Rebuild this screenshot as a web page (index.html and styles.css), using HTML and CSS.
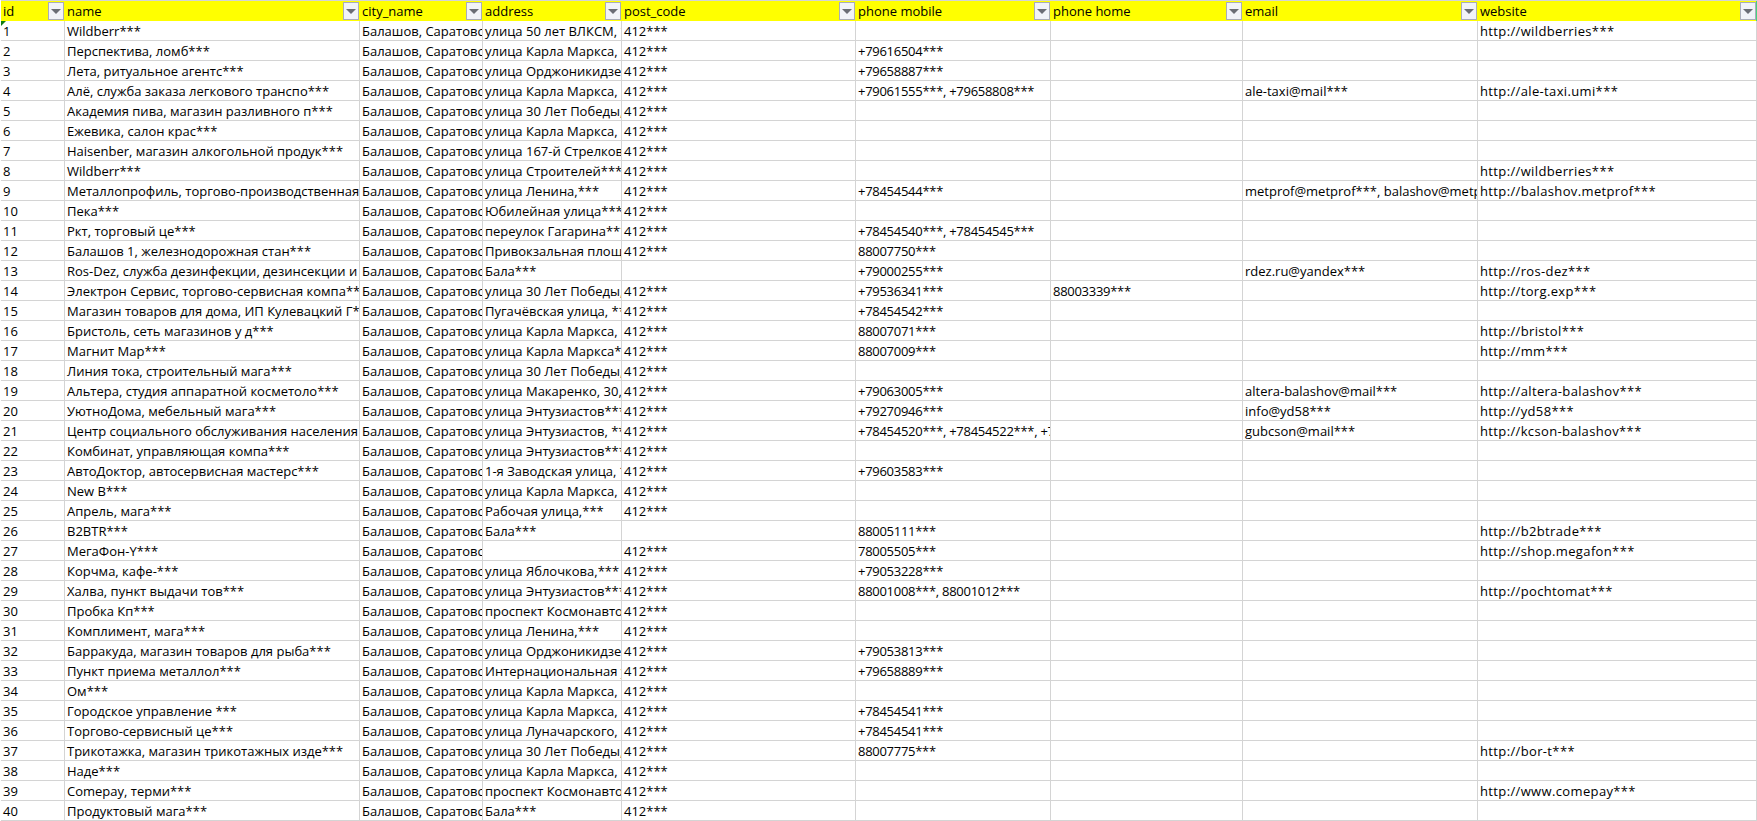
FILE: index.html
```html
<!DOCTYPE html>
<html lang="ru">
<head>
<meta charset="utf-8">
<title>Sheet</title>
<link rel="stylesheet" href="styles.css">
</head>
<body>
<table class="sheet">
<colgroup><col class="c-id"><col class="c-name"><col class="c-city"><col class="c-addr"><col class="c-post"><col class="c-mob"><col class="c-home"><col class="c-email"><col class="c-web"></colgroup>
<thead><tr>
<th><div class="head"><span class="label">id</span><span class="filter"><i class="arrow"></i></span></div></th>
<th><div class="head"><span class="label">name</span><span class="filter"><i class="arrow"></i></span></div></th>
<th><div class="head"><span class="label">city_name</span><span class="filter"><i class="arrow"></i></span></div></th>
<th><div class="head"><span class="label">address</span><span class="filter"><i class="arrow"></i></span></div></th>
<th><div class="head"><span class="label">post_code</span><span class="filter"><i class="arrow"></i></span></div></th>
<th><div class="head"><span class="label">phone mobile</span><span class="filter"><i class="arrow"></i></span></div></th>
<th><div class="head"><span class="label">phone home</span><span class="filter"><i class="arrow"></i></span></div></th>
<th><div class="head"><span class="label">email</span><span class="filter"><i class="arrow"></i></span></div></th>
<th class="last"><div class="head"><span class="label">website</span><span class="filter"><i class="arrow"></i></span></div></th>
</tr></thead>
<tbody>
<tr><td class="flagged">1<i class="flag"></i></td><td>Wildberr***</td><td>Балашов, Саратовская обл***</td><td>улица 50 лет ВЛКСМ, ***</td><td>412***</td><td></td><td></td><td></td><td>http://wildberries***</td></tr>
<tr><td>2</td><td>Перспектива, ломб***</td><td>Балашов, Саратовская обл***</td><td>улица Карла Маркса, ***</td><td>412***</td><td>+79616504***</td><td></td><td></td><td></td></tr>
<tr><td>3</td><td>Лета, ритуальное агентс***</td><td>Балашов, Саратовская обл***</td><td>улица Орджоникидзе, ***</td><td>412***</td><td>+79658887***</td><td></td><td></td><td></td></tr>
<tr><td>4</td><td>Алё, служба заказа легкового транспо***</td><td>Балашов, Саратовская обл***</td><td>улица Карла Маркса, ***</td><td>412***</td><td>+79061555***, +79658808***</td><td></td><td>ale-taxi@mail***</td><td>http://ale-taxi.umi***</td></tr>
<tr><td>5</td><td>Академия пива, магазин разливного п***</td><td>Балашов, Саратовская обл***</td><td>улица 30 Лет Победы, ***</td><td>412***</td><td></td><td></td><td></td><td></td></tr>
<tr><td>6</td><td>Ежевика, салон крас***</td><td>Балашов, Саратовская обл***</td><td>улица Карла Маркса, ***</td><td>412***</td><td></td><td></td><td></td><td></td></tr>
<tr><td>7</td><td>Haisenber, магазин алкогольной продук***</td><td>Балашов, Саратовская обл***</td><td>улица 167-й Стрелковой***</td><td>412***</td><td></td><td></td><td></td><td></td></tr>
<tr><td>8</td><td>Wildberr***</td><td>Балашов, Саратовская обл***</td><td>улица Строителей***</td><td>412***</td><td></td><td></td><td></td><td>http://wildberries***</td></tr>
<tr><td>9</td><td>Металлопрофиль, торгово-производственная компания***</td><td>Балашов, Саратовская обл***</td><td>улица Ленина,***</td><td>412***</td><td>+78454544***</td><td></td><td>metprof@metprof***, balashov@metprof***</td><td>http://balashov.metprof***</td></tr>
<tr><td>10</td><td>Пека***</td><td>Балашов, Саратовская обл***</td><td>Юбилейная улица***</td><td>412***</td><td></td><td></td><td></td><td></td></tr>
<tr><td>11</td><td>Ркт, торговый це***</td><td>Балашов, Саратовская обл***</td><td>переулок Гагарина***</td><td>412***</td><td>+78454540***, +78454545***</td><td></td><td></td><td></td></tr>
<tr><td>12</td><td>Балашов 1, железнодорожная стан***</td><td>Балашов, Саратовская обл***</td><td>Привокзальная площадь***</td><td>412***</td><td>88007750***</td><td></td><td></td><td></td></tr>
<tr><td>13</td><td>Ros-Dez, служба дезинфекции, дезинсекции и дератизации***</td><td>Балашов, Саратовская обл***</td><td>Бала***</td><td></td><td>+79000255***</td><td></td><td>rdez.ru@yandex***</td><td>http://ros-dez***</td></tr>
<tr><td>14</td><td>Электрон Сервис, торгово-сервисная компа***</td><td>Балашов, Саратовская обл***</td><td>улица 30 Лет Победы, ***</td><td>412***</td><td>+79536341***</td><td>88003339***</td><td></td><td>http://torg.exp***</td></tr>
<tr><td>15</td><td>Магазин товаров для дома, ИП Кулевацкий Г***</td><td>Балашов, Саратовская обл***</td><td>Пугачёвская улица, ***</td><td>412***</td><td>+78454542***</td><td></td><td></td><td></td></tr>
<tr><td>16</td><td>Бристоль, сеть магазинов у д***</td><td>Балашов, Саратовская обл***</td><td>улица Карла Маркса, ***</td><td>412***</td><td>88007071***</td><td></td><td></td><td>http://bristol***</td></tr>
<tr><td>17</td><td>Магнит Мар***</td><td>Балашов, Саратовская обл***</td><td>улица Карла Маркса***</td><td>412***</td><td>88007009***</td><td></td><td></td><td>http://mm***</td></tr>
<tr><td>18</td><td>Линия тока, строительный мага***</td><td>Балашов, Саратовская обл***</td><td>улица 30 Лет Победы, ***</td><td>412***</td><td></td><td></td><td></td><td></td></tr>
<tr><td>19</td><td>Альтера, студия аппаратной косметоло***</td><td>Балашов, Саратовская обл***</td><td>улица Макаренко, 30,***</td><td>412***</td><td>+79063005***</td><td></td><td>altera-balashov@mail***</td><td>http://altera-balashov***</td></tr>
<tr><td>20</td><td>УютноДома, мебельный мага***</td><td>Балашов, Саратовская обл***</td><td>улица Энтузиастов***</td><td>412***</td><td>+79270946***</td><td></td><td>info@yd58***</td><td>http://yd58***</td></tr>
<tr><td>21</td><td>Центр социального обслуживания населения Балашовского***</td><td>Балашов, Саратовская обл***</td><td>улица Энтузиастов, ***</td><td>412***</td><td>+78454520***, +78454522***, +78454***</td><td></td><td>gubcson@mail***</td><td>http://kcson-balashov***</td></tr>
<tr><td>22</td><td>Комбинат, управляющая компа***</td><td>Балашов, Саратовская обл***</td><td>улица Энтузиастов***</td><td>412***</td><td></td><td></td><td></td><td></td></tr>
<tr><td>23</td><td>АвтоДоктор, автосервисная мастерс***</td><td>Балашов, Саратовская обл***</td><td>1-я Заводская улица, ***</td><td>412***</td><td>+79603583***</td><td></td><td></td><td></td></tr>
<tr><td>24</td><td>New B***</td><td>Балашов, Саратовская обл***</td><td>улица Карла Маркса, ***</td><td>412***</td><td></td><td></td><td></td><td></td></tr>
<tr><td>25</td><td>Апрель, мага***</td><td>Балашов, Саратовская обл***</td><td>Рабочая улица,***</td><td>412***</td><td></td><td></td><td></td><td></td></tr>
<tr><td>26</td><td>B2BTR***</td><td>Балашов, Саратовская обл***</td><td>Бала***</td><td></td><td>88005111***</td><td></td><td></td><td>http://b2btrade***</td></tr>
<tr><td>27</td><td>МегаФон-Y***</td><td>Балашов, Саратовская обл***</td><td></td><td>412***</td><td>78005505***</td><td></td><td></td><td>http://shop.megafon***</td></tr>
<tr><td>28</td><td>Корчма, кафе-***</td><td>Балашов, Саратовская обл***</td><td>улица Яблочкова,***</td><td>412***</td><td>+79053228***</td><td></td><td></td><td></td></tr>
<tr><td>29</td><td>Халва, пункт выдачи тов***</td><td>Балашов, Саратовская обл***</td><td>улица Энтузиастов***</td><td>412***</td><td>88001008***, 88001012***</td><td></td><td></td><td>http://pochtomat***</td></tr>
<tr><td>30</td><td>Пробка Кп***</td><td>Балашов, Саратовская обл***</td><td>проспект Космонавтов***</td><td>412***</td><td></td><td></td><td></td><td></td></tr>
<tr><td>31</td><td>Комплимент, мага***</td><td>Балашов, Саратовская обл***</td><td>улица Ленина,***</td><td>412***</td><td></td><td></td><td></td><td></td></tr>
<tr><td>32</td><td>Барракуда, магазин товаров для рыба***</td><td>Балашов, Саратовская обл***</td><td>улица Орджоникидзе, ***</td><td>412***</td><td>+79053813***</td><td></td><td></td><td></td></tr>
<tr><td>33</td><td>Пункт приема металлол***</td><td>Балашов, Саратовская обл***</td><td>Интернациональная улица***</td><td>412***</td><td>+79658889***</td><td></td><td></td><td></td></tr>
<tr><td>34</td><td>Ом***</td><td>Балашов, Саратовская обл***</td><td>улица Карла Маркса, ***</td><td>412***</td><td></td><td></td><td></td><td></td></tr>
<tr><td>35</td><td>Городское управление ***</td><td>Балашов, Саратовская обл***</td><td>улица Карла Маркса, ***</td><td>412***</td><td>+78454541***</td><td></td><td></td><td></td></tr>
<tr><td>36</td><td>Торгово-сервисный це***</td><td>Балашов, Саратовская обл***</td><td>улица Луначарского, ***</td><td>412***</td><td>+78454541***</td><td></td><td></td><td></td></tr>
<tr><td>37</td><td>Трикотажка, магазин трикотажных изде***</td><td>Балашов, Саратовская обл***</td><td>улица 30 Лет Победы, ***</td><td>412***</td><td>88007775***</td><td></td><td></td><td>http://bor-t***</td></tr>
<tr><td>38</td><td>Наде***</td><td>Балашов, Саратовская обл***</td><td>улица Карла Маркса, ***</td><td>412***</td><td></td><td></td><td></td><td></td></tr>
<tr><td>39</td><td>Comepay, терми***</td><td>Балашов, Саратовская обл***</td><td>проспект Космонавтов***</td><td>412***</td><td></td><td></td><td></td><td>http://www.comepay***</td></tr>
<tr><td>40</td><td>Продуктовый мага***</td><td>Балашов, Саратовская обл***</td><td>Бала***</td><td>412***</td><td></td><td></td><td></td><td></td></tr>
</tbody>
</table>
</body>
</html>
```
FILE: styles.css
```css
html, body {
  margin: 0;
  padding: 0;
  background: #fff;
  height: 821px;
  overflow: hidden;
}
.sheet {
  table-layout: fixed;
  border-collapse: separate;
  border-spacing: 0;
  width: 1756px;
  margin-left: 1px;
  font: 13px/17px "Open Sans", "Noto Sans", sans-serif;
  color: #000;
}
.c-id { width: 64px; }
.c-name { width: 295px; }
.c-city { width: 123px; }
.c-addr { width: 139px; }
.c-post { width: 234px; }
.c-mob { width: 195px; }
.c-home { width: 192px; }
.c-email { width: 235px; }
.c-web { width: 279px; }
th, td {
  padding: 0;
  box-sizing: border-box;
  overflow: hidden;
  white-space: nowrap;
  text-align: left;
  font-weight: 400;
}
thead tr { height: 21px; }
tbody tr { height: 20px; }
th {
  background: #ffff00;
  border-top: 1px solid #d4d4d4;
  height: 21px;
  vertical-align: top;
}
td {
  height: 20px;
  padding: 2px 0 0 2px;
  border-right: 1px solid #d4d4d4;
  border-bottom: 1px solid #d4d4d4;
  vertical-align: top;
}
td:nth-child(6), td:nth-child(7) { letter-spacing: -0.28px; }
td:nth-child(9) { letter-spacing: 0.36px; }
th.last { box-shadow: inset -1px 0 0 #46d17f; }
.head {
  display: flex;
  align-items: flex-start;
  justify-content: space-between;
  height: 20px;
  padding: 1px 1px 0 2px;
  box-sizing: border-box;
}
.label { line-height: 18px; }
.filter {
  display: flex;
  align-items: center;
  justify-content: center;
  width: 16px;
  height: 18px;
  box-sizing: border-box;
  border: 1px solid #a9adb9;
  background: #f1f3f8;
  flex: none;
}
.arrow {
  display: block;
  width: 0;
  height: 0;
  border-left: 5px solid transparent;
  border-right: 5px solid transparent;
  border-top: 5px solid #6a6d75;
}
.flagged { position: relative; }
.flag {
  position: absolute;
  left: 0;
  top: 0;
  width: 0;
  height: 0;
  border-top: 5px solid #107c10;
  border-right: 5px solid transparent;
}
```
